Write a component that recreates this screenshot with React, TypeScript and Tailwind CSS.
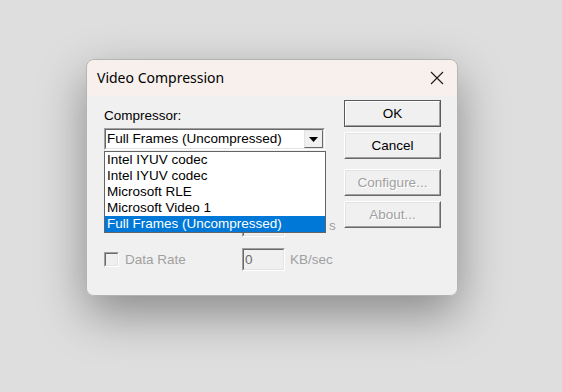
import React from 'react';

const items = [
  'Intel IYUV codec',
  'Intel IYUV codec',
  'Microsoft RLE',
  'Microsoft Video 1',
  'Full Frames (Uncompressed)',
];

// sunken 3d frame used by edit fields, combo and checkboxes
const Sunken: React.FC<{ className?: string; children?: React.ReactNode }> = ({ className, children }) => (
  <div className={`border border-t-[#a0a0a0] border-l-[#a0a0a0] border-b-white border-r-white ${className || ''}`}>
    <div className="w-full h-full border border-t-[#696969] border-l-[#696969] border-b-[#e3e3e3] border-r-[#e3e3e3]">
      {children}
    </div>
  </div>
);

const Btn: React.FC<{ label: string; isDefault?: boolean; disabled?: boolean }> = ({ label, isDefault, disabled }) => (
  <div className={`w-[97px] h-[27px] ${isDefault ? 'border border-[#5a5a5a]' : 'border border-t-white border-l-white border-b-[#696969] border-r-[#696969]'}`}>
    <div
      className={`w-full h-full flex items-center justify-center bg-[#f0f0f0] ${
        isDefault
          ? 'border border-t-white border-l-white border-b-[#a0a0a0] border-r-[#a0a0a0]'
          : 'border border-t-[#e3e3e3] border-l-[#e3e3e3] border-b-[#a0a0a0] border-r-[#a0a0a0]'
      } ${disabled ? 'text-[#a0a0a0] [text-shadow:1px_1px_0_#ffffff]' : 'text-black'}`}
    >
      {label}
    </div>
  </div>
);

const OptionRow: React.FC<{ label?: string; value: string; unit: string; unitOffset?: string }> = ({ label, value, unit, unitOffset }) => (
  <div className="flex items-center h-[23px] text-[#a0a0a0]">
    <div className="w-[138px] flex items-center gap-[6px]">
      <Sunken className="w-[15px] h-[15px]">
        <div className="w-full h-full bg-[#f0f0f0]" />
      </Sunken>
      {label && <span>{label}</span>}
    </div>
    <Sunken className="w-[43px] h-[23px]">
      <div className="w-full h-full bg-[#f0f0f0] pl-[1px] leading-[19px] text-[#6d6d6d]">{value}</div>
    </Sunken>
    <span className={unitOffset || 'ml-[5px]'}>{unit}</span>
  </div>
);

export default function App() {
  return (
    <div className="w-[562px] h-[392px] bg-[#dedede] pt-[59px] pl-[86px] overflow-hidden">
      <div
        className="w-[372px] h-[237px] rounded-[8px] border border-[#b4b4b4] overflow-hidden flex flex-col shadow-[0_18px_48px_rgba(0,0,0,0.38)] text-[13.5px] leading-[16px]"
        style={{ fontFamily: '"Liberation Sans", Arial, sans-serif' }}
      >
        {/* title bar */}
        <div className="h-[36px] bg-[#f7f0ed] flex items-center justify-between pl-[10px] pr-[13px] shrink-0">
          <span className="text-[14px] text-black -mt-[1px]" style={{ fontFamily: '"Noto Sans", "Open Sans", sans-serif' }}>
            Video Compression
          </span>
          <svg width="14" height="14" viewBox="0 0 14 14">
            <path d="M1 1 L13 13 M13 1 L1 13" stroke="#1a1a1a" strokeWidth="1.1" />
          </svg>
        </div>

        {/* body */}
        <div className="flex-1 bg-[#f0f0f0] flex pl-[17px] pt-[4px] gap-[19px]">
          <div className="w-[221px] pt-[8px] relative">
            <div className="h-[16px] text-black">Compressor:</div>
            <div className="mt-[4px] relative">
              <Sunken className="h-[22px] w-[221px]">
                <div className="w-full h-full bg-white flex items-center justify-between pl-[1px]">
                  <span className="text-black whitespace-nowrap">Full Frames (Uncompressed)</span>
                  <div className="w-[19px] h-[18px] border border-t-[#e3e3e3] border-l-[#e3e3e3] border-b-[#696969] border-r-[#696969] bg-[#f0f0f0] flex items-center justify-center">
                    <svg width="9" height="5" viewBox="0 0 9 5">
                      <path d="M0 0 H9 L4.5 5 Z" fill="#000" />
                    </svg>
                  </div>
                </div>
              </Sunken>
              {/* open drop-down list */}
              <div className="absolute left-0 top-[23px] w-[222px] border border-[#646464] bg-white z-10">
                {items.map((it, i) => (
                  <div
                    key={i}
                    className={`h-[16px] pl-[2px] whitespace-nowrap ${i === items.length - 1 ? 'bg-[#0078d7] text-white' : 'text-black'}`}
                  >
                    {it}
                  </div>
                ))}
              </div>
            </div>
            <div className="h-[64px]" />
            <div className="flex flex-col gap-[11px] w-[260px]">
              {/* key frame row, mostly hidden behind the open list */}
              <OptionRow value="" unit="s" unitOffset="ml-[44px] mt-[1px]" />
              <OptionRow label="Data Rate" value="0" unit="KB/sec" />
            </div>
          </div>

          <div className="flex flex-col">
            <Btn label="OK" isDefault />
            <div className="mt-[5px]">
              <Btn label="Cancel" />
            </div>
            <div className="mt-[10px]">
              <Btn label="Configure..." disabled />
            </div>
            <div className="mt-[5px]">
              <Btn label="About..." disabled />
            </div>
          </div>
        </div>
      </div>
    </div>
  );
}
